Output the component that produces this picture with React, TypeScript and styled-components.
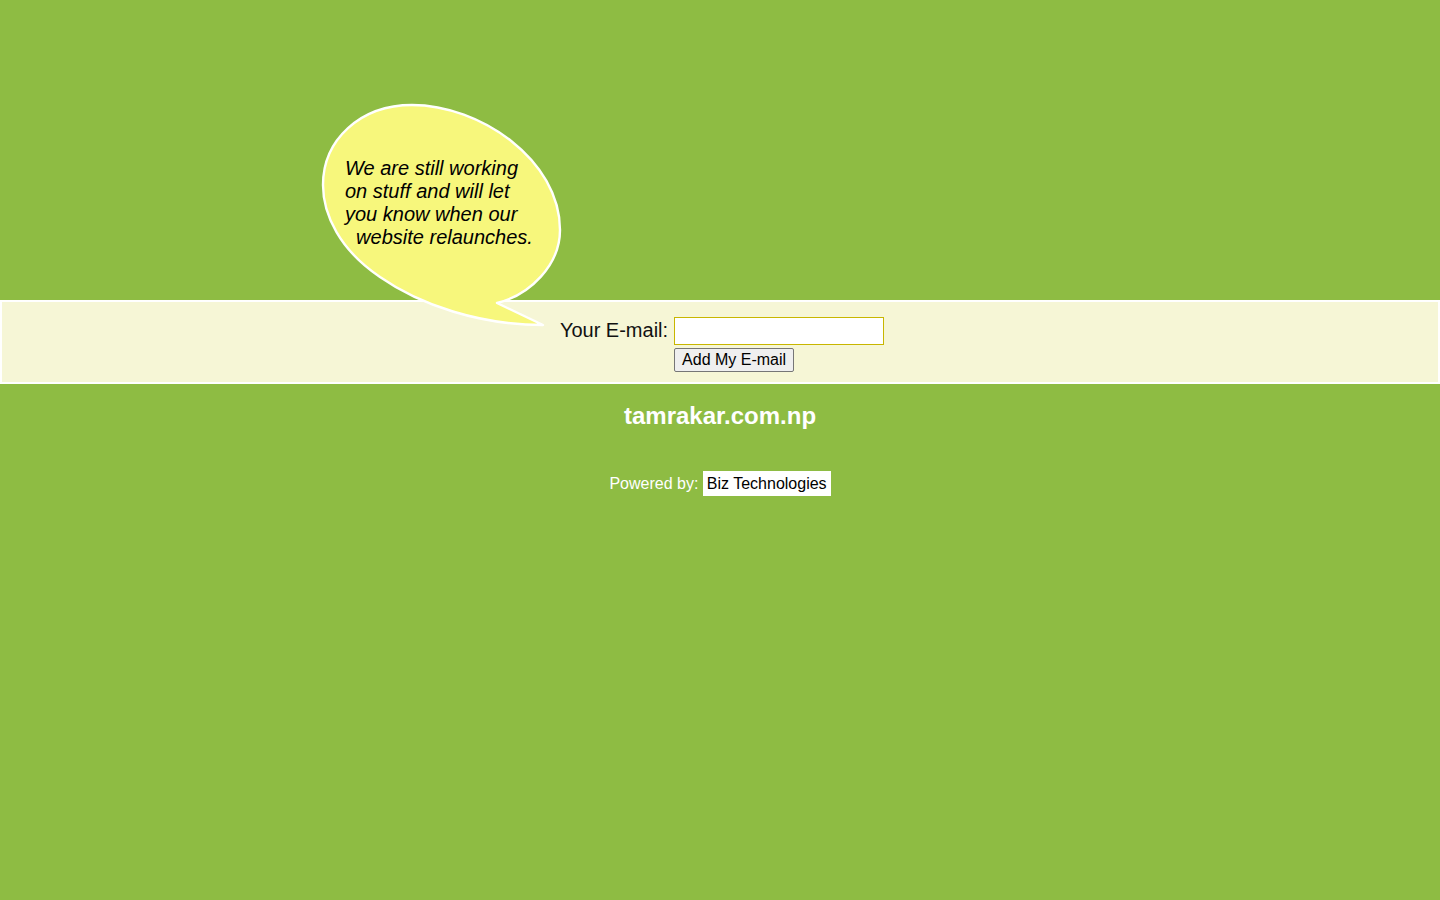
import React from "react";
import styled, { createGlobalStyle } from "styled-components";

const GlobalStyle = createGlobalStyle`
  html, body {
    margin: 0;
    padding: 0;
    background: #8ebc43;
    font-family: "Liberation Sans", Arial, sans-serif;
  }
`;

const Page = styled.div`
  position: relative;
  width: 1440px;
  min-height: 900px;
  background: #8ebc43;
`;

const Top = styled.div`
  height: 300px;
`;

const Band = styled.section`
  box-sizing: border-box;
  height: 84px;
  border: 2px solid #ffffff;
  background: #f6f6d6;
  padding: 15px 0 0 4px;
`;

const FormGrid = styled.form`
  display: grid;
  grid-template-columns: auto auto;
  column-gap: 6px;
  row-gap: 3px;
  justify-content: center;
  align-items: center;
  margin: 0;
`;

const Label = styled.label`
  font-size: 20px;
  color: #111;
  text-align: right;
  margin-top: -2px;
`;

const EmailInput = styled.input`
  box-sizing: border-box;
  width: 210px;
  height: 28px;
  border: 1px solid #c8b600;
  background: #fff;
  margin: 0;
  padding: 0 4px;
  font-size: 16px;
  font-family: "Liberation Sans", Arial, sans-serif;
  outline: none;
`;

const Button = styled.button`
  box-sizing: border-box;
  grid-column: 2;
  justify-self: start;
  height: 24px;
  padding: 0 7px;
  font-size: 16px;
  font-family: "Liberation Sans", Arial, sans-serif;
  color: #000;
  background: #efefef;
  border: 1px solid #767676;
  border-radius: 2px;
  cursor: pointer;
`;

const SiteName = styled.h1`
  margin: 18px 0 0;
  text-align: center;
  color: #fff;
  font-size: 24px;
  font-weight: bold;
  line-height: 28px;
`;

const Powered = styled.p`
  margin: 41px 0 0;
  text-align: center;
  color: #fff;
  font-size: 16px;
  line-height: 25px;
`;

const Brand = styled.a`
  display: inline-block;
  background: #fff;
  color: #000;
  padding: 3px 4px;
  line-height: 19px;
  text-decoration: none;
`;

const Bubble = styled.div`
  position: absolute;
  left: 315px;
  top: 96px;
  width: 260px;
  height: 240px;
`;

const BubbleSvg = styled.svg`
  position: absolute;
  left: 0;
  top: 0;
`;

const BubbleText = styled.p`
  position: absolute;
  left: 30px;
  top: 61px;
  margin: 0;
  font-size: 20px;
  font-style: italic;
  line-height: 23px;
  color: #000;
  white-space: pre;
`;

const bubblePath =
  "M 412 105 C 480 105, 560 160, 560 230 C 560 265, 530 295, 497 303 " +
  "L 543 325 C 480 325, 420 305, 380 277 C 340 250, 323 215, 323 185 " +
  "C 323 140, 360 105, 412 105 Z";

export default function App() {
  return (
    <>
      <GlobalStyle />
      <Page>
        <Top />
        <Band>
          <FormGrid onSubmit={(e) => e.preventDefault()}>
            <Label htmlFor="email">Your E-mail:</Label>
            <EmailInput id="email" type="text" />
            <Button type="submit">Add My E-mail</Button>
          </FormGrid>
        </Band>
        <SiteName>tamrakar.com.np</SiteName>
        <Powered>
          Powered by: <Brand href="#">Biz Technologies</Brand>
        </Powered>
        <Bubble>
          <BubbleSvg width="260" height="240" viewBox="315 96 260 240">
            <path
              d={bubblePath}
              fill="#f7f77c"
              stroke="#ffffff"
              strokeWidth="2.4"
              strokeLinejoin="round"
            />
          </BubbleSvg>
          <BubbleText>
            {"We are still working\non stuff and will let\nyou know when our\n\u00a0\u00a0website relaunches."}
          </BubbleText>
        </Bubble>
      </Page>
    </>
  );
}
